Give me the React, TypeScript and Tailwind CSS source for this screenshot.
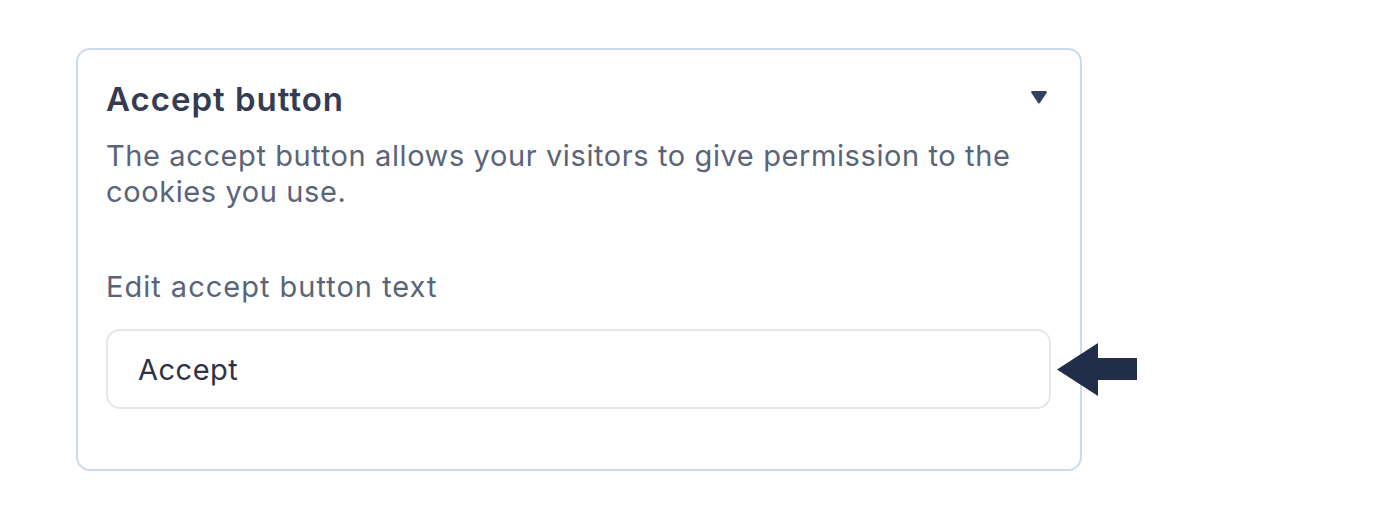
import { useState } from 'react';

export default function App() {
  const [text, setText] = useState('Accept');

  return (
    <div className="w-[1392px] h-[520px] bg-white pl-[76px] pt-[48px] flex items-start font-['Inter','Noto_Sans',sans-serif]">
      <div className="w-[1006px] h-[423px] rounded-[14px] border-2 border-[#cbdaf0] pl-[28px] pr-[29px] pt-[29px]">
        <div className="flex items-center justify-between h-[40px]">
          <h2 className="text-[33px] leading-[40px] font-semibold text-[#343b53] tracking-[1px]">Accept button</h2>
          <svg width="18" height="15" viewBox="0 0 18 15" className="mr-[3px] mt-[-4px]">
            <path d="M2.5 1 H15.5 Q17.6 1 16.4 3.2 L10.2 12.6 Q9 14.3 7.8 12.6 L1.6 3.2 Q0.4 1 2.5 1 Z" fill="#334060" />
          </svg>
        </div>
        <p className="mt-[19px] text-[29px] leading-[36px] text-[#5a6478] w-[936px] tracking-[0.6px]">
          The accept button allows your visitors to give permission to the cookies you use.
        </p>
        <label className="block mt-[59px] text-[29px] leading-[36px] text-[#5a6478] tracking-[1px]">
          Edit accept button text
        </label>
        <div className="mt-[24px] flex items-center">
          <input
            value={text}
            onChange={(e) => setText(e.target.value)}
            className="w-[945px] h-[80px] shrink-0 rounded-[14px] border-2 border-[#e4e7ec] px-[30px] text-[29px] text-[#2d3345] outline-none tracking-[0.5px]"
          />
          <svg width="80" height="53" viewBox="0 0 80 53" className="ml-[6px] shrink-0">
            <path d="M0 26.5 L41 0 L41 15 L80 15 L80 37 L41 37 L41 53 Z" fill="#222d4a" />
          </svg>
        </div>
      </div>
    </div>
  );
}
